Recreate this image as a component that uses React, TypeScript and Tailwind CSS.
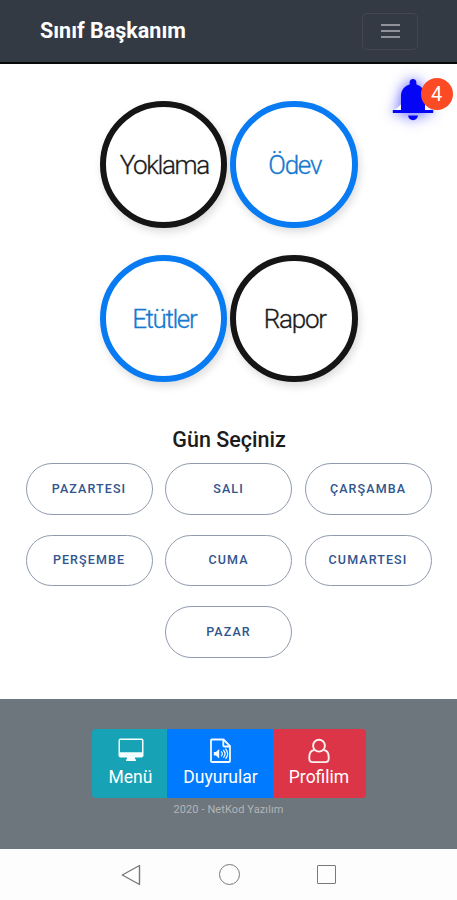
const circles = [
  { label: "Yoklama", tone: "border-[#151515] text-[#1c1c1c]", fit: "tracking-[-1.4px]" },
  { label: "Ödev", tone: "border-[#087bf2] text-[#1479cf]", fit: "tracking-[-1.2px]" },
  { label: "Etütler", tone: "border-[#087bf2] text-[#1479cf]", fit: "tracking-[-1.4px]" },
  { label: "Rapor", tone: "border-[#151515] text-[#1c1c1c]", fit: "tracking-[-1.2px]" },
];

const days = ["PAZARTESI", "SALI", "ÇARŞAMBA", "PERŞEMBE", "CUMA", "CUMARTESI", "PAZAR"];

function Bell() {
  return (
    <svg width="42" height="44" viewBox="0 0 42 44" className="block drop-shadow-[0_0_7px_rgba(0,0,255,0.65)]">
      <path
        d="M21 1c-2 0-3.400 1.500-3.400 3.500v2C12 8.200 9 12.500 9 18v14H.8v3h40.400v-3H33V18c0-5.500-3-9.800-8.600-11.500v-2C24.400 2.500 23 1 21 1Z"
        fill="#0505f5"
      />
      <path d="M3 32 9 26.500V32ZM39 32l-6-5.500V32Z" fill="#fff" />
      <path d="M16 37.500h10c-.5 2.800-2.400 4.700-5 4.700s-4.500-1.900-5-4.700Z" fill="#0505f5" />
    </svg>
  );
}

function Desktop() {
  return (
    <svg width="26" height="24" viewBox="0 0 26 24" className="block">
      <path
        fill="#f4ffff"
        fillRule="evenodd"
        d="M2.500.5h21c1.100 0 2 .8 2 1.900v15.200c0 1.100-.9 1.900-2 1.900H17v1.800h1V23H8v-1.700h1v-1.800H2.500c-1.100 0-2-.8-2-1.900V2.400C.5 1.300 1.400.5 2.500.5Zm0 1.600c-.3 0-.5.200-.5.500v11.600h22V2.600c0-.3-.2-.5-.5-.5Z"
      />
    </svg>
  );
}

function AudioFile() {
  return (
    <svg width="22" height="26" viewBox="0 0 22 26" fill="none" stroke="#f4fbff" strokeWidth="1.800" className="block">
      <path d="M2 1.500h11.500l6.500 6.500v15c0 .6-.4 1-1 1H2c-.6 0-1-.4-1-1V2.500c0-.6.4-1 1-1Z" />
      <path d="M13.300 1.500v6c0 .6.400 1 1 1H20" />
      <path d="M3.800 14h2.100l3.300-3v9.500l-3.300-3H3.800Z" fill="#f4fbff" stroke="none" />
      <path d="M11.200 13.300c1.300 1.400 1.300 3.600 0 5M13.300 12c2.200 2.400 2.200 5.300 0 7.700M15.500 10.700c2.700 3.300 2.700 7 0 10.200" strokeWidth="1.200" />
    </svg>
  );
}

function Profile() {
  return (
    <svg width="22" height="26" viewBox="0 0 22 26" fill="none" stroke="#fff0f0" strokeWidth="1.900" className="block">
      <circle cx="11" cy="7.700" r="5.900" />
      <path d="M6.500 12C3 12.200 1.300 15.300 1.300 19.300v1.200c0 2.200 1.400 3.600 3.500 3.600h12.400c2.100 0 3.500-1.400 3.500-3.600v-1.200c0-4-1.700-7.100-5.200-7.300" />
    </svg>
  );
}

export default function App() {
  return (
    <div className="relative flex h-[900px] w-[457px] flex-col overflow-hidden bg-white font-['Roboto','Liberation_Sans',sans-serif]">
      <header className="flex h-[64px] shrink-0 items-center justify-between border-b-2 border-[#08090b] bg-[#343a43] pr-[39px] pl-[40px]">
        <h1 className="text-[21.500px] leading-[28px] font-bold text-white">Sınıf Başkanım</h1>
        <button className="flex h-[37px] w-[56px] flex-col items-center justify-center gap-[4px] rounded-[5px] border-[1.500px] border-[#42474f]">
          <i className="h-[2px] w-[19px] bg-[#8f9298]" />
          <i className="h-[2px] w-[19px] bg-[#8f9298]" />
          <i className="h-[2px] w-[19px] bg-[#8f9298]" />
        </button>
      </header>

      <div className="absolute top-[78px] left-[392px]">
        <Bell />
        <span className="absolute top-0 left-[28.500px] flex h-[32px] w-[32px] items-center justify-center rounded-full bg-[#fc4a25] text-[20px] text-white">
          4
        </span>
      </div>

      <main className="flex h-[635px] shrink-0 flex-col items-center pt-[36.500px]">
        <section className="grid grid-cols-2 gap-x-[3px] gap-y-[26.500px]">
          {circles.map((c) => (
            <button
              key={c.label}
              className={`h-[127.500px] w-[127.500px] rounded-full border-[6px] bg-white pt-[3px] pl-[2px] text-[26px] font-light shadow-[2px_4px_8px_rgba(0,0,0,0.14)] [-webkit-text-stroke:0.3px_currentColor] ${c.tone} ${c.fit}`}
            >
              {c.label}
            </button>
          ))}
        </section>
        <h2 className="mt-[43px] pl-[1px] text-[21.500px] leading-[30px] font-medium text-[#1c1c1c]">Gün Seçiniz</h2>
        <section className="mt-[8px] flex w-[420px] flex-wrap justify-center gap-x-[12.500px] gap-y-[20px]">
          {days.map((day) => (
            <button
              key={day}
              className="h-[51.500px] w-[127px] rounded-full border border-[#8f9bac] bg-white pt-[1px] text-[12.500px] font-medium tracking-[1.100px] text-[#31558d]"
            >
              {day}
            </button>
          ))}
        </section>
      </main>

      <footer className="flex h-[150px] shrink-0 flex-col items-center bg-[#6d757d] pt-[30px]">
        <nav className="flex h-[69px] overflow-hidden rounded-[4px] text-[17.500px] leading-[22px] text-white">
          <a className="flex w-[75px] flex-col items-center bg-[#17a2b5] pt-[9px] pl-[3px]">
            <span className="flex h-[28px] items-start"><Desktop /></span>
            Menü
          </a>
          <a className="flex w-[106px] flex-col items-center bg-[#007bff] pt-[9px] pl-[2px]">
            <span className="flex h-[28px] items-start"><AudioFile /></span>
            Duyurular
          </a>
          <a className="flex w-[93px] flex-col items-center bg-[#dc3547] pt-[9px]">
            <span className="flex h-[28px] items-start"><Profile /></span>
            Profilim
          </a>
        </nav>
        <p className="mt-[5px] text-[11px] leading-[14px] tracking-[0.100px] text-[#b2b6ba]">2020 - NetKod Yazılım</p>
      </footer>

      <nav className="flex h-[51px] shrink-0 items-center justify-between bg-[#fdfdfd] px-[120px]">
        <svg width="22" height="24" viewBox="0 0 22 24" fill="none" stroke="#77797b" strokeWidth="1.400">
          <path d="M19.500 2.500v19L2.300 12Z" strokeLinejoin="round" />
        </svg>
        <i className="h-[21px] w-[21px] rounded-full border-[1.500px] border-[#77797b]" />
        <i className="mr-[1px] h-[19px] w-[19px] rounded-[1px] border-[1.500px] border-[#77797b]" />
      </nav>
    </div>
  );
}
